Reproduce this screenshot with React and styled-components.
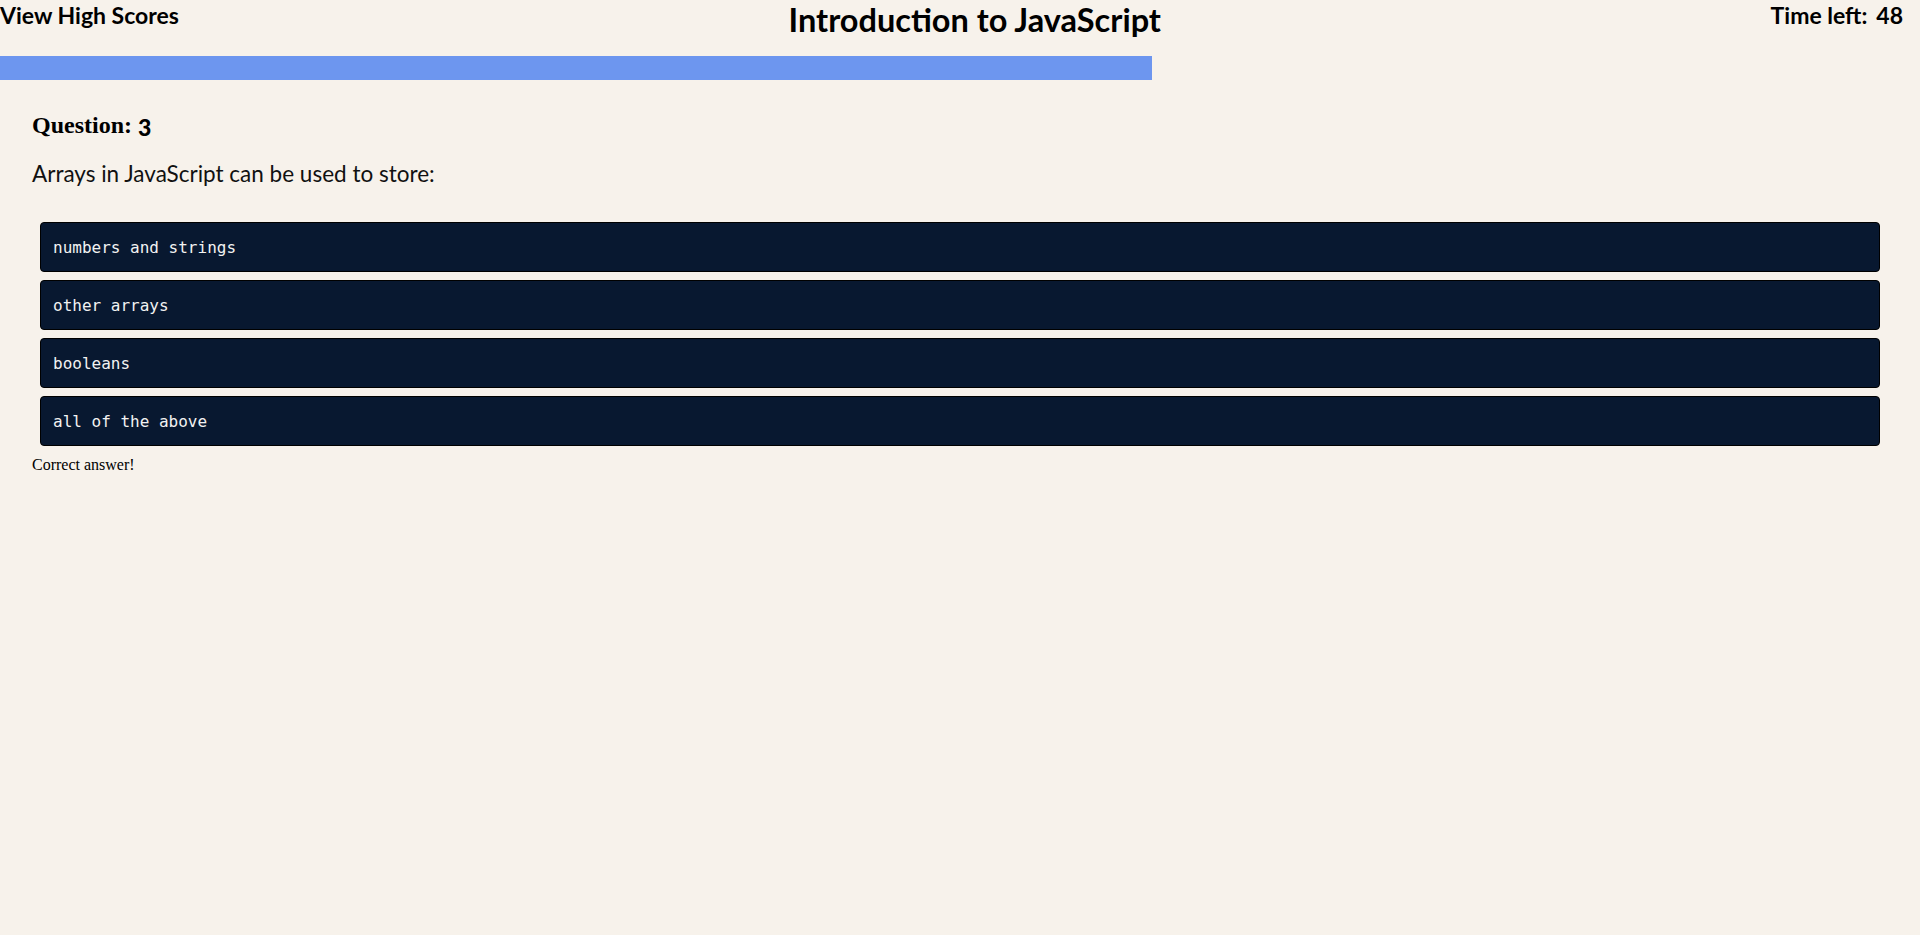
// IMPORTS
import React from 'react';
import styled, { createGlobalStyle } from 'styled-components';

// DATA
const question = {
    number: 3,
    text: 'Arrays in JavaScript can be used to store:',
    choices: ['numbers and strings', 'other arrays', 'booleans', 'all of the above'],
};
const progress = 60;

// COMPONENT
const App = () => {
    return (
        <>
            <GlobalStyle />
            <Page>
                <Header>
                    <HighScores>View High Scores</HighScores>
                    <Title>Introduction to JavaScript</Title>
                    <Timer>
                        <span>Time left:</span>
                        <span>48</span>
                    </Timer>
                </Header>

                <ProgressTrack>
                    <ProgressFill style={{ width: `${progress}%` }} />
                </ProgressTrack>

                <Quiz>
                    <QuestionLabel>
                        Question: <QuestionNumber>{question.number}</QuestionNumber>
                    </QuestionLabel>
                    <QuestionText>{question.text}</QuestionText>

                    <Choices>
                        {question.choices.map((choice) => (
                            <Choice key={choice}>{choice}</Choice>
                        ))}
                    </Choices>

                    <Feedback>Correct answer!</Feedback>
                </Quiz>
            </Page>
        </>
    );
};

// STYLED COMPONENTS
const GlobalStyle = createGlobalStyle`
    * {
        box-sizing: border-box;
    }

    body {
        margin: 0;
        background-color: #f7f2eb;
        font-family: "Liberation Serif", "Times New Roman", serif;
    }
`

const Page = styled.div`
    min-height: 935px;
    background-color: #f7f2eb;
`

const Header = styled.header`
    height: 56px;
    display: flex;
    justify-content: space-between;
    align-items: flex-start;
    padding-right: 17px;
    font-family: Lato, "Liberation Sans", sans-serif;
    font-weight: 700;
    color: #000;
`

const HighScores = styled.a`
    font-size: 23px;
    line-height: 30px;
    cursor: pointer;
`

const Title = styled.h1`
    margin: 0;
    padding-top: 1px;
    font-size: 32.5px;
    line-height: 38px;
    font-weight: 700;
`

const Timer = styled.div`
    display: flex;
    gap: 9px;
    font-size: 23px;
    line-height: 30px;
`

const ProgressTrack = styled.div`
    width: 100%;
    height: 24px;
`

const ProgressFill = styled.div`
    height: 100%;
    background-color: #6d96ef;
`

const Quiz = styled.main`
    padding: 29px 32px 0;
`

const QuestionLabel = styled.h3`
    margin: 0;
    font-size: 24px;
    line-height: 32px;
    font-weight: 700;
`

const QuestionNumber = styled.span`
    font-family: Lato, "Liberation Sans", sans-serif;
    font-size: 23px;
    font-weight: 900;
    vertical-align: -3px;
`

const QuestionText = styled.p`
    margin: 16px 0 0;
    font-family: Lato, "Liberation Sans", sans-serif;
    font-size: 22.5px;
    line-height: 30px;
    color: #111;
`

const Choices = styled.div`
    display: flex;
    flex-direction: column;
    gap: 8px;
    margin: 33px 8px 0;
`

const Choice = styled.button`
    height: 50px;
    padding: 0 12px;
    text-align: left;
    background-color: #081830;
    color: #f2f2f2;
    border: 1px solid #000;
    border-radius: 4px;
    font-family: "DejaVu Sans Mono", "Liberation Mono", monospace;
    font-size: 16px;
    cursor: pointer;
`

const Feedback = styled.p`
    margin: 9px 0 0;
    font-size: 16px;
    line-height: 20px;
`

// EXPORT
export default App;
